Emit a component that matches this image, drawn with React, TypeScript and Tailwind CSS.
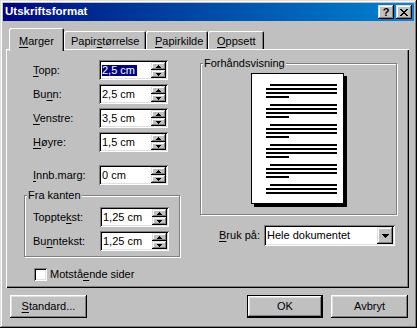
import type { ReactNode } from 'react';

const raised =
  'shadow-[inset_-1px_-1px_#000,inset_1px_1px_#fff,inset_-2px_-2px_#808080,inset_2px_2px_#dfdfdf]';
const raisedSmall =
  'shadow-[inset_-1px_-1px_#000,inset_1px_1px_#dfdfdf,inset_-2px_-2px_#808080,inset_2px_2px_#fff]';
const sunken =
  'shadow-[inset_1px_1px_#808080,inset_-1px_-1px_#fff,inset_2px_2px_#000,inset_-2px_-2px_#dfdfdf]';
const etched = 'border border-[#808080] shadow-[1px_1px_0_#fff,inset_1px_1px_0_#fff]';

function U({ children }: { children: ReactNode }) {
  return <span className="underline underline-offset-[2px] decoration-1">{children}</span>;
}

function Arrow({ down }: { down?: boolean }) {
  return (
    <svg width="5" height="3" viewBox="0 0 5 3" className="block">
      <path
        d={down ? 'M0 0H5V1H4V2H3V3H2V2H1V1H0Z' : 'M2 0H3V1H4V2H5V3H0V2H1V1H2Z'}
        fill="#000"
      />
    </svg>
  );
}

function SpinField({ value, selected }: { value: string; selected?: boolean }) {
  return (
    <div className={`flex h-[20px] w-[69px] items-center bg-white pl-[3px] pr-[2px] ${sunken}`}>
      <span className={selected ? 'bg-[#000080] pr-[2px] text-white' : ''}>{value}</span>
      <div className="ml-auto flex h-[16px] w-[15px] flex-col">
        <div className={`flex h-[8px] items-center justify-center bg-[#c0c0c0] ${raisedSmall}`}>
          <Arrow />
        </div>
        <div className={`flex h-[8px] items-center justify-center bg-[#c0c0c0] ${raisedSmall}`}>
          <Arrow down />
        </div>
      </div>
    </div>
  );
}

function Row({ label, value, selected, w = 75 }: { label: ReactNode; value: string; selected?: boolean; w?: number }) {
  return (
    <div className="flex h-[20px] items-center">
      <div className={w === 75 ? 'w-[75px] pl-[9px]' : 'w-[75px] pl-[8px]'}>{label}</div>
      <SpinField value={value} selected={selected} />
    </div>
  );
}

function PagePreview() {
  const lines: { x1: number; y: number }[][] = [];
  for (let g = 0; g < 6; g++) {
    const y0 = 11 + g * 20;
    const grp = [
      { x1: 19, y: y0 },
      { x1: 15, y: y0 + 4 },
      { x1: 15, y: y0 + 8 },
    ];
    lines.push(grp);
  }
  return (
    <svg width="96" height="134" viewBox="0 0 96 134" className="block">
      <rect x="3" y="3" width="93" height="131" fill="#000" />
      <rect x="0.5" y="0.5" width="92" height="130" fill="#fff" stroke="#000" />
      {lines.flat().map((l, i) => (
        <rect key={i} x={l.x1} y={l.y} width={86 - l.x1} height="2" fill="#000" />
      ))}
      {[0, 1, 2, 3, 4].map((g) => (
        <rect key={`s${g}`} x="15" y={11 + g * 20 + 12} width="23" height="2" fill="#000" />
      ))}
    </svg>
  );
}

export default function App() {
  return (
    <div
      className={`flex h-[328px] w-[417px] flex-col bg-[#c0c0c0] p-[3px] text-[11px] leading-none text-black font-['Liberation_Sans',Arial,sans-serif] shadow-[inset_-1px_-1px_#000,inset_1px_1px_#dfdfdf,inset_-2px_-2px_#808080,inset_2px_2px_#fff]`}
    >
      {/* Title bar */}
      <div className="flex h-[18px] items-center bg-gradient-to-r from-[#000080] to-[#1084d0] pl-[2px] pr-[2px]">
        <span className="text-[11.5px] font-bold text-white">Utskriftsformat</span>
        <div className="ml-auto flex gap-[2px]">
          <div className={`flex h-[14px] w-[16px] items-center justify-center bg-[#c0c0c0] ${raisedSmall}`}>
            <span className="text-[11px] font-bold leading-none">?</span>
          </div>
          <div className={`flex h-[14px] w-[16px] items-center justify-center bg-[#c0c0c0] ${raisedSmall}`}>
            <svg width="8" height="7" viewBox="0 0 8 7" className="block">
              <path
                d="M0 0H2V1H3V2H5V1H6V0H8V1H7V2H6V3H5V4H6V5H7V6H8V7H6V6H5V5H3V6H2V7H0V6H1V5H2V4H3V3H2V2H1V1H0Z"
                fill="#000"
              />
            </svg>
          </div>
        </div>
      </div>

      {/* Tabs */}
      <div className="ml-[6px] mt-[7px] flex h-[21px] items-end">
        <div className="relative z-10 -mb-[2px] flex h-[23px] w-[55px] items-start rounded-t-[2px] bg-[#c0c0c0] pl-[10px] pt-[8px] shadow-[inset_1px_1px_#fff,inset_-1px_0_#000,inset_-2px_0_#808080]">
          <span>
            <U>M</U>arger
          </span>
        </div>
        <div className="flex h-[18px] w-[82px] items-start rounded-t-[2px] pl-[7px] pt-[5px] shadow-[inset_1px_1px_#fff,inset_-1px_0_#000,inset_-2px_0_#808080]">
          <span>
            Papir<U>s</U>tørrelse
          </span>
        </div>
        <div className="flex h-[18px] w-[62px] items-start rounded-t-[2px] pl-[9px] pt-[5px] shadow-[inset_1px_1px_#fff,inset_-1px_0_#000,inset_-2px_0_#808080]">
          <span>
            <U>P</U>apirkilde
          </span>
        </div>
        <div className="flex h-[18px] w-[56px] items-start rounded-t-[2px] pl-[9px] pt-[5px] shadow-[inset_1px_1px_#fff,inset_-1px_0_#000,inset_-2px_0_#808080]">
          <span>
            <U>O</U>ppsett
          </span>
        </div>
      </div>

      {/* Panel */}
      <div className="ml-[3px] flex h-[239px] w-[403px] pl-[18px] pt-[11px] shadow-[inset_1px_1px_#fff,inset_-1px_-1px_#000,inset_-2px_-2px_#808080]">
        {/* Left column */}
        <div className="flex w-[156px] flex-col">
          <div className="flex flex-col gap-[4px]">
            <Row label={<><U>T</U>opp:</>} value="2,5 cm" selected />
            <Row label={<>Bu<U>n</U>n:</>} value="2,5 cm" />
            <Row label={<><U>V</U>enstre:</>} value="3,5 cm" />
            <Row label={<><U>H</U>øyre:</>} value="1,5 cm" />
          </div>
          <div className="mt-[13px]">
            <Row label={<><U>I</U>nnb.marg:</>} value="0 cm" />
          </div>
          <div className={`relative mt-[10px] h-[62px] ${etched}`}>
            <span className="absolute -top-[6px] left-[2px] bg-[#c0c0c0] px-[1px]">Fra kanten</span>
            <div className="flex flex-col gap-[4px] pt-[11px]">
              <Row w={74} label={<>Toppte<U>k</U>st:</>} value="1,25 cm" />
              <Row w={74} label={<>Bu<U>n</U>ntekst:</>} value="1,25 cm" />
            </div>
          </div>
          <div className="ml-[10px] mt-[11px] flex items-center">
            <div className={`h-[13px] w-[13px] bg-white ${sunken}`} />
            <span className="ml-[3px]">
              Motstå<U>e</U>nde sider
            </span>
          </div>
        </div>

        {/* Right column */}
        <div className="ml-[20px] flex w-[197px] flex-col">
          <div className={`relative mt-[3px] flex h-[152px] justify-center pt-[9px] ${etched}`}>
            <span className="absolute -top-[6px] left-[2px] bg-[#c0c0c0] px-[1px]">Forhåndsvisning</span>
            <div className="pl-[1px]">
              <PagePreview />
            </div>
          </div>
          <div className="mr-[2px] mt-[10px] flex items-center justify-end">
            <span className="mr-[4px]">
              <U>B</U>ruk på:
            </span>
            <div className={`flex h-[21px] w-[131px] items-center bg-white pl-[3px] pr-[2px] ${sunken}`}>
              <span>Hele dokumentet</span>
              <div className={`ml-auto flex h-[17px] w-[16px] items-center justify-center bg-[#c0c0c0] ${raisedSmall}`}>
                <svg width="7" height="4" viewBox="0 0 7 4" className="block">
                  <path d="M0 0H7V1H6V2H5V3H4V4H3V3H2V2H1V1H0Z" fill="#000" />
                </svg>
              </div>
            </div>
          </div>
        </div>
      </div>

      {/* Buttons */}
      <div className="mt-[7px] flex h-[23px]">
        <button className={`ml-[7px] h-[23px] w-[77px] bg-[#c0c0c0] ${raised}`}>
          <U>S</U>tandard...
        </button>
        <button
          className={`ml-auto h-[23px] w-[76px] border border-black bg-[#c0c0c0] shadow-[inset_-1px_-1px_#000,inset_1px_1px_#fff,inset_-2px_-2px_#808080,inset_2px_2px_#dfdfdf]`}
        >
          OK
        </button>
        <button className={`ml-[8px] mr-[6px] h-[23px] w-[77px] bg-[#c0c0c0] ${raised}`}>Avbryt</button>
      </div>
    </div>
  );
}
